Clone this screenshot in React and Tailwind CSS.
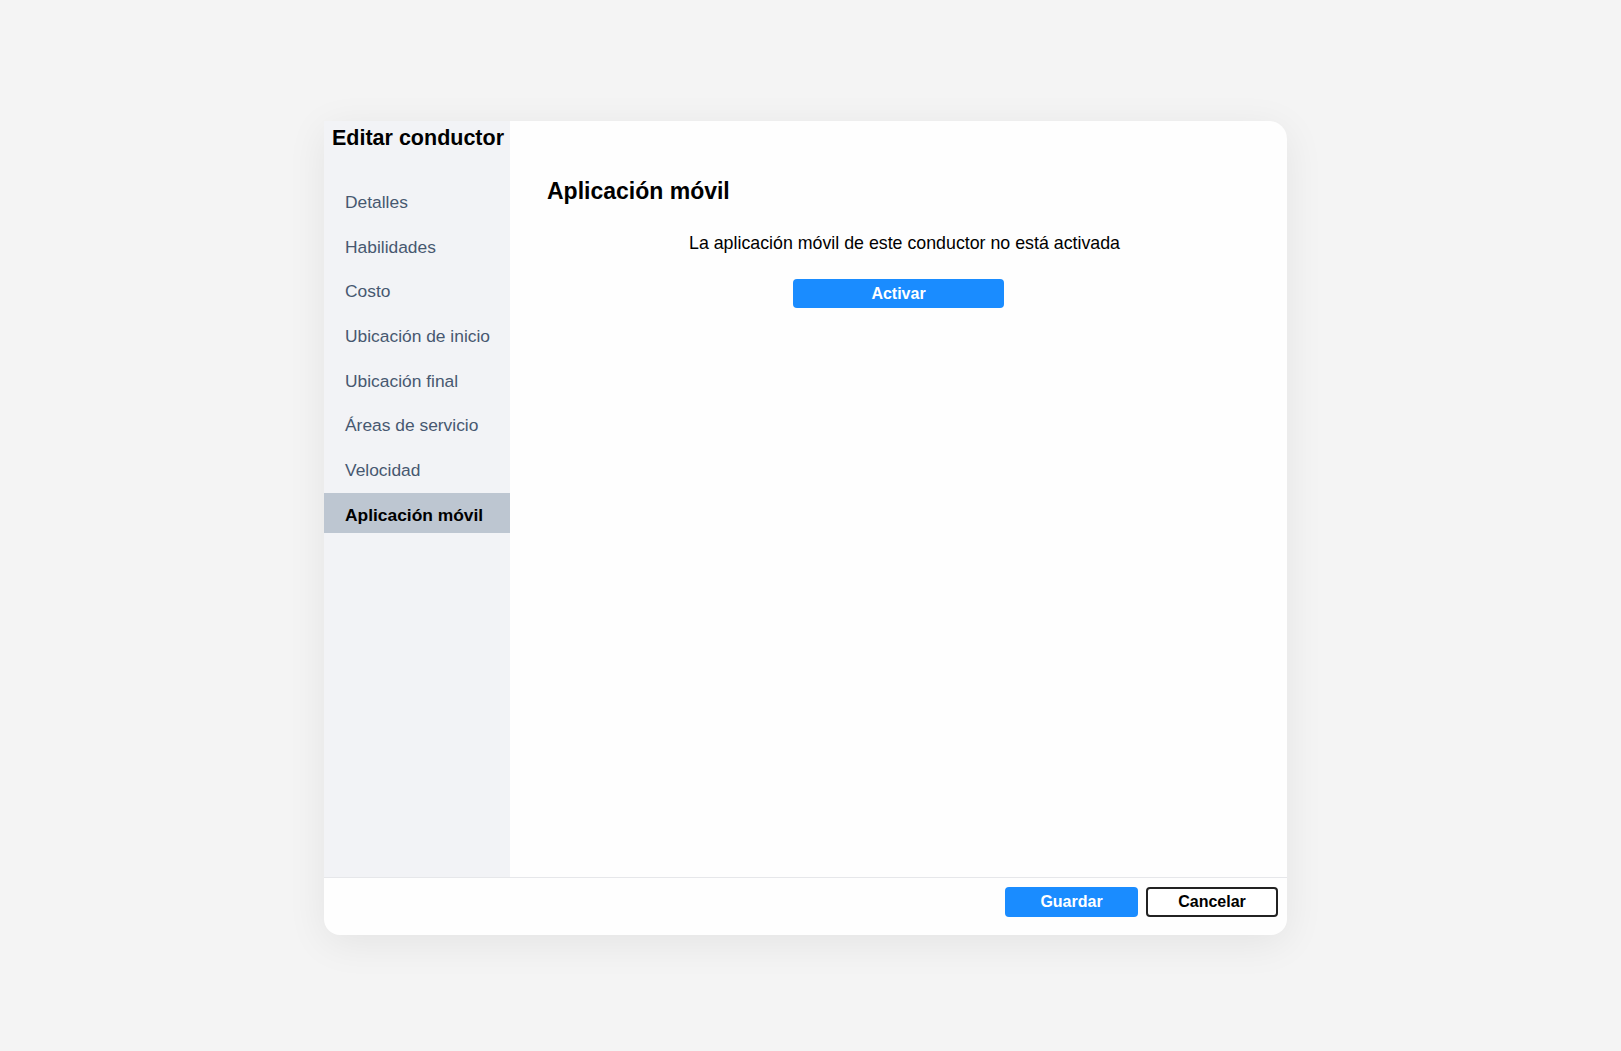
// Editar conductor — driver edit dialog, "Aplicación móvil" tab.

const NAV_ITEMS = [
  'Detalles',
  'Habilidades',
  'Costo',
  'Ubicación de inicio',
  'Ubicación final',
  'Áreas de servicio',
  'Velocidad',
  'Aplicación móvil',
]

function SideNav({ active }) {
  return (
    <nav className="mt-[30px] flex flex-col gap-[4.7px]">
      {NAV_ITEMS.map((item) => (
        <div
          key={item}
          className={`h-[40px] flex items-center pl-[21px] pt-[4px] text-[17.4px] whitespace-nowrap ${
            item === active ? 'bg-[#bdc6d1] font-bold text-black' : 'text-[#475870]'
          }`}
        >
          {item}
        </div>
      ))}
    </nav>
  )
}

export default function App() {
  return (
    <div className="min-h-screen w-full bg-[#f4f4f4] flex items-center justify-center pt-[5px] pr-[10px] font-['Liberation_Sans',Arial,sans-serif]">
      <div className="w-[963px] h-[814px] bg-[#fefefe] rounded-tr-[18px] rounded-b-[16px] shadow-[0_8px_40px_rgba(0,0,0,0.07)] flex flex-col overflow-hidden">
        <div className="flex flex-1 min-h-0">
          {/* Sidebar */}
          <aside className="w-[186px] bg-[#f2f3f6] flex flex-col">
            <h1 className="pl-[8px] pt-[5px] text-[21.5px] leading-6 font-bold text-black whitespace-nowrap">
              Editar conductor
            </h1>
            <SideNav active="Aplicación móvil" />
          </aside>

          {/* Content */}
          <main className="flex-1 pt-[56px] px-[37px]">
            <h2 className="text-[23px] leading-7 font-bold text-black">Aplicación móvil</h2>
            <div className="flex flex-col items-center">
              <p className="mt-[26px] pl-[12px] text-[17.8px] leading-6 text-black">
                La aplicación móvil de este conductor no está activada
              </p>
              <button className="mt-[24px] w-[211px] h-[29px] rounded-[4px] bg-[#1a8cff] text-white text-[16px] font-bold">
                Activar
              </button>
            </div>
          </main>
        </div>

        {/* Footer */}
        <footer className="h-[58px] border-t border-[#e6e7ea] flex justify-end items-start gap-[8px] pt-[9px] pr-[9px]">
          <button className="w-[133px] h-[30px] rounded-[4px] bg-[#1a8cff] text-white text-[16px] font-bold">
            Guardar
          </button>
          <button className="w-[132px] h-[30px] rounded-[4px] border-2 border-[#222] bg-white text-black text-[16px] font-bold">
            Cancelar
          </button>
        </footer>
      </div>
    </div>
  )
}
